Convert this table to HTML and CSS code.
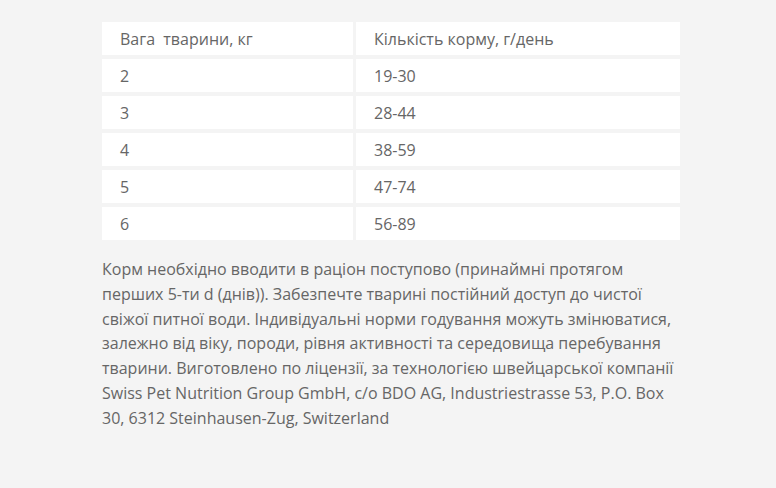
FILE: index.html
```html
<!DOCTYPE html>
<html lang="uk">
<head>
<meta charset="utf-8">
<link rel="stylesheet" href="styles.css">
</head>
<body>
<div class="wrap">
  <table class="feed">
    <tr><td>Вага&nbsp; тварини, кг</td><td>Кількість корму, г/день</td></tr>
    <tr><td>2</td><td>19-30</td></tr>
    <tr><td>3</td><td>28-44</td></tr>
    <tr><td>4</td><td>38-59</td></tr>
    <tr><td>5</td><td>47-74</td></tr>
    <tr><td>6</td><td>56-89</td></tr>
  </table>
  <p class="note">Корм необхідно вводити в раціон поступово (принаймні протягом перших 5-ти d (днів)). Забезпечте тварині постійний доступ до чистої свіжої питної води. Індивідуальні норми годування можуть змінюватися, залежно від віку, породи, рівня активності та середовища перебування тварини. Виготовлено по ліцензії, за технологією швейцарської компанії Swiss Pet Nutrition Group GmbH, c/o BDO AG, Industriestrasse 53, P.O. Box 30, 6312 Steinhausen-Zug, Switzerland</p>
</div>
</body>
</html>
```
FILE: styles.css
```css
html, body {
  margin: 0;
  background: #f4f4f4;
}
body {
  font-family: "Open Sans", "Noto Sans", sans-serif;
  color: #666;
}
.wrap {
  width: 584px;
  margin-left: 99px;
  padding-top: 18px;
}
.feed {
  width: 584px;
  border-collapse: separate;
  border-spacing: 3px 4px;
  font-size: 16px;
}
.feed td {
  background: #fff;
  height: 33px;
  padding: 0 18px;
  box-sizing: border-box;
  vertical-align: middle;
  line-height: 20px;
}
.feed td:first-child {
  width: 251px;
}
.note {
  margin: 13px 0 0 3px;
  width: 580px;
  font-size: 16px;
  line-height: 24.8px;
}
```
